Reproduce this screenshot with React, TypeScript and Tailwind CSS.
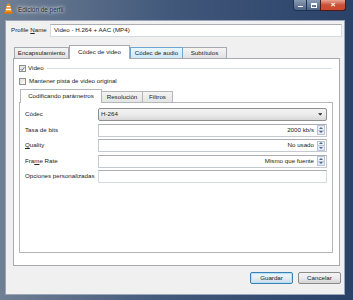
import React from "react";

function Check({ on }: { on?: boolean }) {
  return (
    <span className="flex h-[7px] w-[7px] shrink-0 items-center justify-center border border-[#8e8f8f] bg-gradient-to-br from-[#dedede] to-[#fbfbfb]">
      {on && (
        <svg viewBox="0 0 8 8" className="h-[6px] w-[6px]">
          <path d="M1 4.2 L3.1 6.3 L7 1.2" fill="none" stroke="#4a5f80" strokeWidth="1.4" />
        </svg>
      )}
    </span>
  );
}

function Spin({ value }: { value: string }) {
  return (
    <div className="flex h-[13px] items-center border border-[#c5cad2] border-t-[#abadb3] bg-white pl-1 pr-[1px]">
      <span className="flex-1 text-right">{value}</span>
      <div className="ml-[3px] flex h-[10px] w-[8px] flex-col border border-[#b8c6d8]">
        <div className="flex flex-1 items-center justify-center bg-[#e9f1fb]">
          <svg viewBox="0 0 6 3" className="h-[2px] w-[4px]">
            <path d="M0 3 L3 0 L6 3Z" fill="#59677a" />
          </svg>
        </div>
        <div className="flex flex-1 items-center justify-center border-t border-[#b8c6d8] bg-[#e1ebf7]">
          <svg viewBox="0 0 6 3" className="h-[2px] w-[4px]">
            <path d="M0 0 L6 0 L3 3Z" fill="#59677a" />
          </svg>
        </div>
      </div>
    </div>
  );
}

function Row({ label, children }: { label: React.ReactNode; children: React.ReactNode }) {
  return (
    <div className="flex h-[13px] items-center">
      <span className="w-[73px] shrink-0">{label}</span>
      <div className="flex-1">{children}</div>
    </div>
  );
}

export default function App() {
  return (
    <div className="flex h-[300px] w-[353px] flex-col overflow-hidden bg-gradient-to-r from-[#6f7f94] via-[#40577a] to-[#2a4268] font-['Liberation_Sans',Arial,sans-serif] text-[6.2px] leading-none text-[#222]">
      {/* title bar */}
      <div className="flex h-[20px] shrink-0 items-start">
        <svg viewBox="0 0 10 12" className="ml-[4px] mt-[3px] h-[11px] w-[9px]">
          <path d="M3.6 0.5 L6.4 0.5 L9 10 L1 10Z" fill="#f08a12" />
          <path d="M3.1 3.2 L6.9 3.2 L7.3 4.7 L2.7 4.7Z" fill="#fff" />
          <path d="M2.3 6.4 L7.7 6.4 L8.1 7.9 L1.9 7.9Z" fill="#fff" />
          <rect x="0" y="10" width="10" height="1.6" rx="0.5" fill="#e07a0a" />
        </svg>
        <span className="ml-[5px] mt-[7px] text-[6.4px] text-[#1e2530] [text-shadow:0_0_5px_#fff,0_0_3px_#fff]">
          Edición de perfil
        </span>
        <div className="ml-auto mr-[7px] flex h-[11px]">
          <div className="flex w-[14px] items-center justify-center rounded-bl-[3px] border border-t-0 border-[#1f3352] bg-gradient-to-b from-[#8a9bb3] to-[#4d6384]">
            <span className="mt-[3px] h-[1.5px] w-[5px] bg-white" />
          </div>
          <div className="flex w-[13px] items-center justify-center border-y border-[#1f3352] border-t-0 bg-gradient-to-b from-[#8a9bb3] to-[#4d6384]">
            <span className="h-[5px] w-[6px] border border-t-2 border-white" />
          </div>
          <div className="flex w-[26px] items-center justify-center rounded-br-[3px] border border-t-0 border-[#4a1a1a] bg-gradient-to-b from-[#e8a493] via-[#c7503a] to-[#cf4a2c] text-[8px] font-bold text-white">
            ×
          </div>
        </div>
      </div>

      {/* body */}
      <div className="ml-[5px] mr-[8px] mb-[5px] flex flex-1 flex-col border border-[#9aa6b8] bg-[#f0f0f0]">
        <div className="flex pl-[5px] pr-[2px] pt-[3px]">
          <span className="flex h-[13px] w-[39px] items-center">
            Profile&nbsp;<span className="underline">N</span>ame
          </span>
          <div className="flex h-[13px] flex-1 items-center border border-[#d5dae2] border-t-[#abadb3] bg-white pl-[3px]">
            Video - H.264 + AAC (MP4)
          </div>
        </div>

        {/* outer tabs */}
        <div className="ml-[7px] mt-[8px] flex h-[13px] items-end pl-px">
          <div className="flex h-[11px] w-[55px] items-center justify-center border border-b-0 border-[#a6a9ae] bg-gradient-to-b from-[#f4f4f4] to-[#e2e2e2]">
            Encapsulamiento
          </div>
          <div className="relative z-10 -mb-px flex h-[14px] w-[61px] items-center justify-center border border-b-0 border-[#a6a9ae] bg-white">
            Códec de video
          </div>
          <div className="flex h-[11px] w-[53px] items-center justify-center border border-b-0 border-[#6fa6cf] bg-gradient-to-b from-[#eaf6fd] to-[#cde9f8]">
            Códec de audio
          </div>
          <div className="flex h-[11px] w-[44px] items-center justify-center border border-b-0 border-l-0 border-[#a6a9ae] bg-gradient-to-b from-[#f4f4f4] to-[#e2e2e2]">
            Subtítulos
          </div>
        </div>

        {/* outer panel */}
        <div className="ml-[7px] mr-[4px] flex h-[208px] flex-col border border-[#a6a9ae] bg-white">
          <div className="flex items-center pl-[5px] pr-[7px] pt-[6px]">
            <Check on />
            <span className="ml-[2px]">Video</span>
            <span className="ml-[3px] h-px flex-1 bg-[#d5dfe5]" />
          </div>
          <div className="mt-[6px] flex items-center pl-[5px]">
            <Check />
            <span className="ml-[3px]">Mantener pista de video original</span>
          </div>

          {/* inner tabs */}
          <div className="ml-[6px] mt-[4px] flex h-[13px] items-end">
            <div className="relative z-10 -mb-px flex h-[14px] w-[82px] items-center justify-center border border-b-0 border-[#b4b6ba] bg-white">
              Codificando parámetros
            </div>
            <div className="flex h-[11px] w-[41px] items-center justify-center border border-b-0 border-l-0 border-[#b4b6ba] bg-gradient-to-b from-[#f4f4f4] to-[#e4e4e4]">
              Resolución
            </div>
            <div className="flex h-[11px] w-[30px] items-center justify-center border border-b-0 border-l-0 border-[#b4b6ba] bg-gradient-to-b from-[#f4f4f4] to-[#e4e4e4]">
              Filtros
            </div>
          </div>

          <div className="ml-[5px] mr-[6px] flex h-[151px] flex-col gap-[2.5px] border border-[#b4b6ba] bg-white px-[5px] pt-[5px]">
            <Row label="Códec">
              <div className="flex h-[13px] items-center rounded-[2px] border border-[#8e8f8f] bg-gradient-to-b from-[#f3f3f3] via-[#ebebeb] to-[#d8d8d8] pl-[2px] pr-[4px]">
                <span className="flex-1">H-264</span>
                <svg viewBox="0 0 6 3" className="h-[2.5px] w-[4.5px]">
                  <path d="M0 0 L6 0 L3 3Z" fill="#222" />
                </svg>
              </div>
            </Row>
            <Row label="Tasa de bits">
              <Spin value="2000 kb/s" />
            </Row>
            <Row label={<><span className="underline">Q</span>uality</>}>
              <Spin value="No usado" />
            </Row>
            <Row label={<>Fra<span className="underline">m</span>e Rate</>}>
              <Spin value="Mismo que fuente" />
            </Row>
            <Row label="Opciones personalizadas">
              <div className="h-[13px] border border-[#d5dae2] border-t-[#abadb3] bg-white" />
            </Row>
          </div>
        </div>

        {/* buttons */}
        <div className="mt-[6px] flex justify-end gap-[5px] pr-[3px]">
          <button
            type="button"
            className="flex h-[12px] w-[43px] items-center justify-center rounded-[2px] border border-[#3c7fb1] bg-gradient-to-b from-[#eaf6fd] via-[#e3eef6] to-[#c9dcea] shadow-[inset_0_0_0_1px_#b6e0f8]"
          >
            Guardar
          </button>
          <button
            type="button"
            className="flex h-[12px] w-[43px] items-center justify-center rounded-[2px] border border-[#8b8b8b] bg-gradient-to-b from-[#f3f3f3] via-[#ebebeb] to-[#d4d4d4]"
          >
            Cancelar
          </button>
        </div>
      </div>
    </div>
  );
}
